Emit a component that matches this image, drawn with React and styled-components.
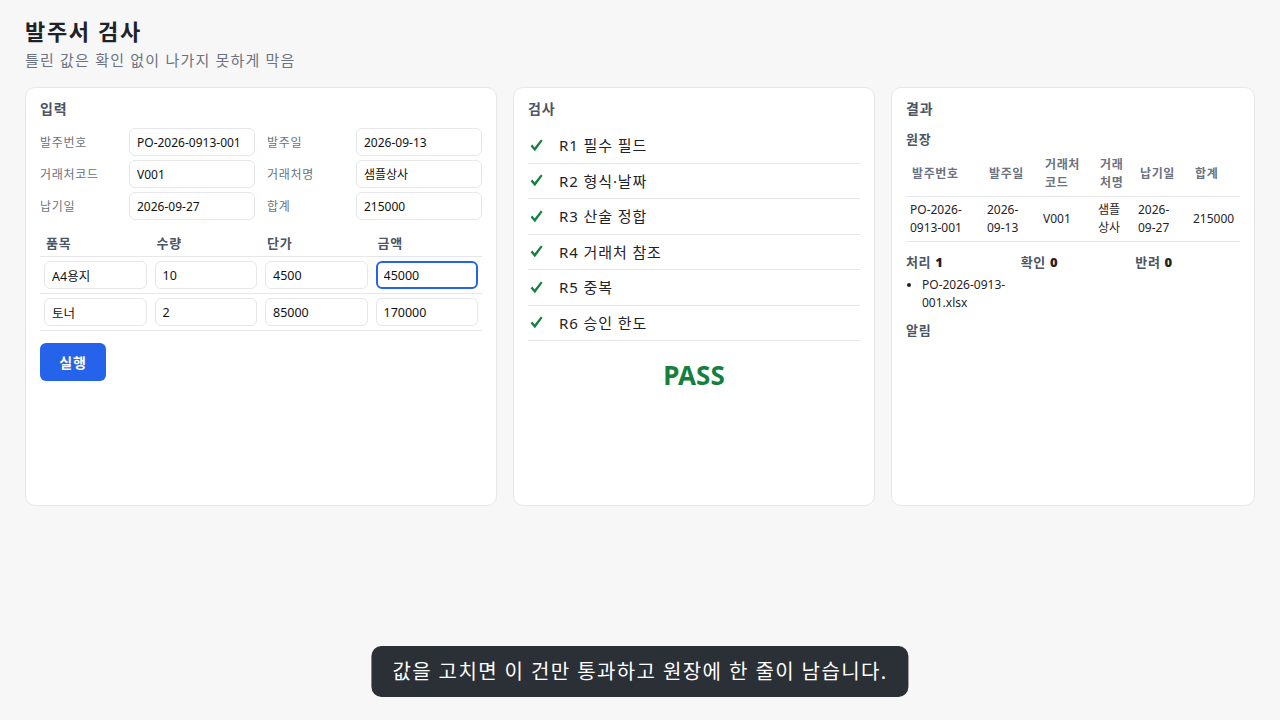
import React from "react";
import styled, { createGlobalStyle } from "styled-components";

const GlobalStyle = createGlobalStyle`
  * { box-sizing: border-box; }
  html, body { margin: 0; padding: 0; }
  body {
    background: #f7f7f7;
    color: #1f2328;
    font-family: "Noto Sans", "Noto Sans CJK KR", sans-serif;
  }
`;

const colors = {
  border: "#e5e7eb",
  muted: "#6b7280",
  heading: "#4b5563",
  green: "#15803d",
  blue: "#2563eb",
};

const Page = styled.div`
  padding: 16px 25px 24px;
  min-height: 720px;
`;

const Title = styled.h1`
  margin: 0;
  font-size: 22px;
  line-height: 30px;
  font-weight: 700;
  letter-spacing: 0.075em;
  color: #1f2328;
`;

const Subtitle = styled.p`
  margin: 0 0 13px;
  font-size: 15px;
  line-height: 28px;
  letter-spacing: 0.08em;
  color: ${colors.muted};
`;

const Columns = styled.div`
  display: grid;
  grid-template-columns: 472px 1fr 1fr;
  gap: 16px;
`;

const Card = styled.section`
  background: #fff;
  border: 1px solid ${colors.border};
  border-radius: 10px;
  padding: 12px 14px;
  height: 419px;
`;

const CardTitle = styled.h2`
  margin: 0 0 10px;
  font-size: 14px;
  line-height: 18px;
  font-weight: 700;
  letter-spacing: 0.06em;
  color: ${colors.heading};
`;

const FormGrid = styled.div`
  display: grid;
  grid-template-columns: 1fr 1fr;
  column-gap: 12px;
  row-gap: 4px;
`;

const Field = styled.label`
  display: flex;
  align-items: center;
`;

const FieldLabel = styled.span`
  width: 89px;
  flex: none;
  font-size: 12px;
  letter-spacing: 0.06em;
  color: ${colors.muted};
`;

const Input = styled.input`
  width: 100%;
  min-width: 0;
  height: 28px;
  border: ${(p) => (p.$focused ? `2px solid ${colors.blue}` : `1px solid ${colors.border}`)};
  padding: 0 6px 0 ${(p) => (p.$focused ? "6px" : "7px")};
  border-radius: 6px;
  background: #fff;
  color: #111;
  font-family: inherit;
  font-size: ${(p) => p.$size || "12px"};
  outline: none;
`;

const ItemTable = styled.table`
  width: 100%;
  margin-top: 10px;
  border-collapse: collapse;
  table-layout: fixed;

  th {
    text-align: left;
    padding: 5px 6px 4px;
    font-size: 13px;
    line-height: 17px;
    font-weight: 600;
    letter-spacing: 0.07em;
    color: ${colors.heading};
    border-bottom: 1px solid ${colors.border};
  }

  td {
    padding: 4px 4px;
    border-bottom: 1px solid ${colors.border};
  }
`;

const RunButton = styled.button`
  margin-top: 12px;
  width: 66px;
  height: 38px;
  border: none;
  border-radius: 6px;
  background: ${colors.blue};
  color: #fff;
  font-family: inherit;
  font-size: 14px;
  font-weight: 700;
  letter-spacing: 0.06em;
  cursor: pointer;
`;

const CheckList = styled.ul`
  list-style: none;
  margin: 0;
  padding: 0;
`;

const CheckRow = styled.li`
  display: flex;
  align-items: center;
  gap: 16px;
  padding: 7px 2px;
  font-size: 15px;
  line-height: 20.5px;
  letter-spacing: 0.06em;
  color: #1f2328;
  border-bottom: 1px solid ${colors.border};
`;

const Verdict = styled.div`
  margin-top: 17px;
  text-align: center;
  font-size: 26px;
  line-height: 34px;
  font-weight: 700;
  color: ${(p) => (p.$pass ? colors.green : "#b91c1c")};
`;

const SubHeading = styled.h3`
  margin: ${(p) => p.$margin || "0"};
  font-size: 13px;
  line-height: 18px;
  font-weight: 700;
  letter-spacing: 0.06em;
  color: ${colors.heading};
`;

const LedgerTable = styled.table`
  width: 100%;
  margin-top: 4px;
  border-collapse: collapse;
  table-layout: fixed;
  font-size: 12px;

  th {
    padding: 4px 6px;
    line-height: 18px;
    font-weight: 600;
    letter-spacing: 0.05em;
    color: ${colors.muted};
    text-align: left;
    border-bottom: 1px solid ${colors.border};
  }

  td {
    padding: 4px 4px;
    line-height: 18px;
    color: #1f2328;
    text-align: left;
    border-bottom: 1px solid ${colors.border};
  }
`;

const Tally = styled.div`
  display: grid;
  grid-template-columns: repeat(3, 1fr);
  column-gap: 10px;
  margin-top: 11px;
`;

const TallyLabel = styled.div`
  font-size: 13px;
  line-height: 18px;
  font-weight: 700;
  letter-spacing: 0.05em;
  color: ${colors.heading};

  b {
    color: #1f2328;
  }
`;

const FileList = styled.ul`
  margin: 5px 0 0;
  padding-left: 16px;
  font-size: 12px;
  line-height: 18px;
  color: #1f2328;
`;

const Toast = styled.div`
  position: fixed;
  left: 50%;
  bottom: 23px;
  transform: translateX(-50%);
  padding: 12px 21px;
  border-radius: 10px;
  background: #2b2f36;
  color: #fff;
  font-size: 20px;
  line-height: 27px;
  letter-spacing: 0.07em;
  white-space: nowrap;
`;

const CheckIcon = () => (
  <svg width="13" height="13" viewBox="0 0 13 13" aria-hidden="true">
    <path
      d="M0.6 7.2 L2.4 5.6 L4.6 8.4 L10.9 0.6 L12.6 1.8 L4.9 12.2 Z"
      fill={colors.green}
    />
  </svg>
);

const fields = [
  ["발주번호", "PO-2026-0913-001"],
  ["발주일", "2026-09-13"],
  ["거래처코드", "V001"],
  ["거래처명", "샘플상사"],
  ["납기일", "2026-09-27"],
  ["합계", "215000"],
];

const items = [
  ["A4용지", "10", "4500", "45000"],
  ["토너", "2", "85000", "170000"],
];

const rules = [
  "R1 필수 필드",
  "R2 형식·날짜",
  "R3 산술 정합",
  "R4 거래처 참조",
  "R5 중복",
  "R6 승인 한도",
];

const ledgerCols = [77, 56, 55, 40, 55, 51];

export default function App() {
  return (
    <>
      <GlobalStyle />
      <Page>
        <Title>발주서 검사</Title>
        <Subtitle>틀린 값은 확인 없이 나가지 못하게 막음</Subtitle>

        <Columns>
          <Card>
            <CardTitle>입력</CardTitle>
            <FormGrid>
              {fields.map(([label, value]) => (
                <Field key={label}>
                  <FieldLabel>{label}</FieldLabel>
                  <Input defaultValue={value} />
                </Field>
              ))}
            </FormGrid>

            <ItemTable>
              <thead>
                <tr>
                  <th>품목</th>
                  <th>수량</th>
                  <th>단가</th>
                  <th>금액</th>
                </tr>
              </thead>
              <tbody>
                {items.map((row, r) => (
                  <tr key={row[0]}>
                    {row.map((cell, c) => (
                      <td key={c}>
                        <Input
                          $size="12.5px"
                          $focused={r === 0 && c === 3}
                          defaultValue={cell}
                        />
                      </td>
                    ))}
                  </tr>
                ))}
              </tbody>
            </ItemTable>

            <RunButton>실행</RunButton>
          </Card>

          <Card>
            <CardTitle>검사</CardTitle>
            <CheckList>
              {rules.map((rule) => (
                <CheckRow key={rule}>
                  <CheckIcon />
                  {rule}
                </CheckRow>
              ))}
            </CheckList>
            <Verdict $pass>PASS</Verdict>
          </Card>

          <Card>
            <CardTitle>결과</CardTitle>
            <SubHeading $margin="12px 0 0">원장</SubHeading>
            <LedgerTable>
              <colgroup>
                {ledgerCols.map((w, i) => (
                  <col key={i} style={{ width: w }} />
                ))}
              </colgroup>
              <thead>
                <tr>
                  <th>발주번호</th>
                  <th>발주일</th>
                  <th>거래처코드</th>
                  <th>거래처명</th>
                  <th>납기일</th>
                  <th>합계</th>
                </tr>
              </thead>
              <tbody>
                <tr>
                  <td>PO-2026-0913-001</td>
                  <td>2026-09-13</td>
                  <td>V001</td>
                  <td>샘플상사</td>
                  <td>2026-09-27</td>
                  <td>215000</td>
                </tr>
              </tbody>
            </LedgerTable>

            <Tally>
              <div>
                <TallyLabel>
                  처리 <b>1</b>
                </TallyLabel>
                <FileList>
                  <li>PO-2026-0913-001.xlsx</li>
                </FileList>
              </div>
              <TallyLabel>
                확인 <b>0</b>
              </TallyLabel>
              <TallyLabel>
                반려 <b>0</b>
              </TallyLabel>
            </Tally>

            <SubHeading $margin="9px 0 0">알림</SubHeading>
          </Card>
        </Columns>
      </Page>

      <Toast>값을 고치면 이 건만 통과하고 원장에 한 줄이 남습니다.</Toast>
    </>
  );
}
